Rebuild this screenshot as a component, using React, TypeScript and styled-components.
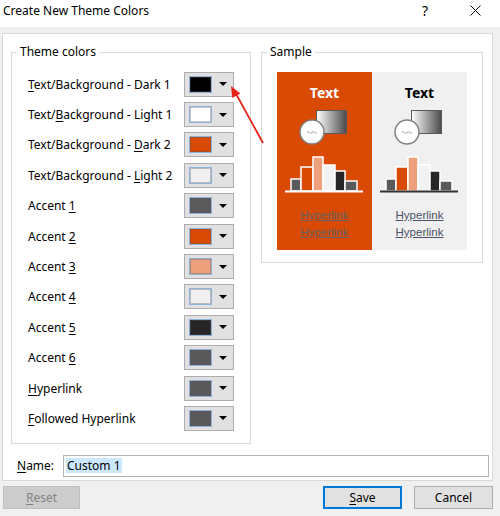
import React from 'react';
import styled, {createGlobalStyle} from 'styled-components';

const GlobalStyle = createGlobalStyle`
  html, body {
    margin: 0;
    padding: 0;
    background: #f0f0f0;
  }
  body {
    font-family: 'Segoe UI', 'Noto Sans', sans-serif;
  }
`;

// label split around its underlined access key
type Swatch = {pre: string; key: string; post: string; color: string};

const rows: Swatch[] = [
  {pre: '', key: 'T', post: 'ext/Background - Dark 1', color: '#000000'},
  {pre: 'Text/', key: 'B', post: 'ackground - Light 1', color: '#ffffff'},
  {pre: 'Text/Background - ', key: 'D', post: 'ark 2', color: '#d94a05'},
  {pre: 'Text/Background - ', key: 'L', post: 'ight 2', color: '#f0f0f0'},
  {pre: 'Accent ', key: '1', post: '', color: '#5a5a5a'},
  {pre: 'Accent ', key: '2', post: '', color: '#d94a05'},
  {pre: 'Accent ', key: '3', post: '', color: '#eda07b'},
  {pre: 'Accent ', key: '4', post: '', color: '#f0f0f0'},
  {pre: 'Accent ', key: '5', post: '', color: '#262626'},
  {pre: 'Accent ', key: '6', post: '', color: '#595959'},
  {pre: '', key: 'H', post: 'yperlink', color: '#595959'},
  {pre: '', key: 'F', post: 'ollowed Hyperlink', color: '#595959'},
];

// bar geometry inside the sample drawing: [left, right, top]
const bars: [number, number, number][] = [
  [14, 24, 75],
  [24, 36, 63],
  [36, 46, 53],
  [46, 58, 61],
  [58, 68, 67],
  [68, 80, 77],
];

const barColors = ['#5a5a5a', '#d94a05', '#eda07b', '#f2f2f2', '#262626', '#5a5a5a'];

type SampleProps = {
  id: string;
  bg: string;
  text: string;
  link: string;
  base: string;
};

const SamplePanel: React.FC<SampleProps> = ({id, bg, text, link, base}) => (
  <Panel $bg={bg}>
    <PanelTitle $color={text}>Text</PanelTitle>
    <svg width="95" height="90" viewBox="0 0 95 90">
      <defs>
        <linearGradient id={id} x1="0" y1="0" x2="1" y2="0">
          <stop offset="0" stopColor="#ffffff" />
          <stop offset="1" stopColor="#4a4a4a" />
        </linearGradient>
      </defs>
      <rect x="39.5" y="6.5" width="30" height="23" fill={`url(#${id})`} stroke="#595959" />
      <circle cx="35" cy="28" r="12" fill="#ffffff" stroke="#7f7f7f" strokeWidth="1.5" />
      <path
        d="M30 28.5 q1.25 -1.6 2.5 0 t2.5 0 t2.5 0 t2.5 0"
        fill="none"
        stroke="#8a8a8a"
        strokeWidth="0.8"
      />
      {bars.map(([l, r, t], i) => (
        <rect
          key={i}
          x={l}
          y={t}
          width={r - l}
          height={87 - t}
          fill={barColors[i]}
          stroke="#ffffff"
          strokeWidth="1.5"
        />
      ))}
      <line x1="8" y1="87.5" x2="86" y2="87.5" stroke={base} strokeWidth="2" />
    </svg>
    <Links>
      <SampleLink $color={link}>Hyperlink</SampleLink>
      <SampleLink $color={link}>Hyperlink</SampleLink>
    </Links>
  </Panel>
);

const App: React.FC = () => (
  <>
    <GlobalStyle />
    <Dialog>
      <TitleBar>
        <Title>Create New Theme Colors</Title>
        <HelpButton>?</HelpButton>
        <CloseButton>
          <svg width="11" height="11" viewBox="0 0 11 11">
            <path d="M0.5 0.5 L10.5 10.5 M10.5 0.5 L0.5 10.5" stroke="#000" strokeWidth="1" />
          </svg>
        </CloseButton>
      </TitleBar>

      <Body>
        <Columns>
          <Group>
            <Legend>Theme colors</Legend>
            <ThemeList>
              {rows.map((row, i) => (
                <Row key={i}>
                  <Label>
                    {row.pre}
                    <Key>{row.key}</Key>
                    {row.post}
                  </Label>
                  <ColorButton>
                    <SwatchBox $color={row.color} />
                    <DropArrow />
                  </ColorButton>
                </Row>
              ))}
            </ThemeList>
          </Group>

          <SampleGroup>
            <Legend>Sample</Legend>
            <SampleBody>
              <SamplePanel id="g1" bg="#d94a05" text="#ffffff" link="#626262" base="#ffffff" />
              <SamplePanel id="g2" bg="#f0f0f0" text="#000000" link="#4b5068" base="#333333" />
            </SampleBody>
          </SampleGroup>
        </Columns>

        <NameRow>
          <NameLabel>
            <Key>N</Key>ame:
          </NameLabel>
          <NameField>
            <Selected>Custom 1</Selected>
          </NameField>
        </NameRow>
      </Body>

      <Footer>
        <Button disabled $width={77}>
          <Key>R</Key>eset
        </Button>
        <Spacer />
        <Button $primary $width={79}>
          <Key>S</Key>ave
        </Button>
        <Button $width={79}>Cancel</Button>
      </Footer>

      <Annotation width="500" height="516" viewBox="0 0 500 516">
        <line x1="263" y1="143" x2="235" y2="92" stroke="#e32219" strokeWidth="1.8" />
        <polygon points="231,86 232.3,97.9 240.3,93.5" fill="#e32219" />
      </Annotation>
    </Dialog>
  </>
);

export default App;

const Dialog = styled.div`
  position: relative;
  width: 500px;
  height: 516px;
  display: flex;
  flex-direction: column;
  background: #f0f0f0;
  color: #000;
  font-size: 12px;
  overflow: hidden;
`;

const TitleBar = styled.div`
  height: 27px;
  box-sizing: border-box;
  display: flex;
  align-items: flex-start;
  padding: 3px 0 0 3px;
  background: #ffffff;
  line-height: 16px;
`;

const Title = styled.div`
  flex: 1;
  font-size: 12px;
`;

const HelpButton = styled.div`
  width: 46px;
  margin-right: 4px;
  text-align: center;
  font-size: 14px;
  line-height: 16px;
`;

const CloseButton = styled.div`
  width: 46px;
  margin-right: 2px;
  display: flex;
  justify-content: center;
  padding-top: 2px;
`;

const Body = styled.div`
  margin: 6px 7px 0 2px;
  height: 448px;
  box-sizing: border-box;
  background: #ffffff;
  border: 1px solid #d9d9d9;
  display: flex;
  flex-direction: column;
`;

const Columns = styled.div`
  display: flex;
  align-items: flex-start;
  gap: 10px;
  padding: 10px 8px 0 8px;
`;

const Group = styled.fieldset`
  width: 240px;
  box-sizing: border-box;
  margin: 0;
  padding: 0;
  border: 1px solid #dcdcdc;
  min-inline-size: 0;
`;

const SampleGroup = styled(Group)`
  width: 222px;
`;

const Legend = styled.legend`
  margin-left: 5px;
  padding: 0 3px;
  font-size: 12px;
  line-height: 16px;
`;

const ThemeList = styled.div`
  display: grid;
  grid-auto-rows: 30.4px;
  padding: 9px 16px 9px 16px;
`;

const Row = styled.div`
  display: flex;
  align-items: center;
`;

const Label = styled.div`
  flex: 1;
  white-space: nowrap;
`;

const Key = styled.u`
  text-decoration: underline;
  text-underline-offset: 2px;
`;

const ColorButton = styled.div`
  width: 50px;
  height: 25px;
  box-sizing: border-box;
  display: flex;
  align-items: center;
  padding-left: 4px;
  background: #e1e1e1;
  border: 1px solid #adadad;
`;

const SwatchBox = styled.div<{$color: string}>`
  width: 23px;
  height: 17px;
  box-sizing: border-box;
  background: ${(p) => p.$color};
  border: 1px solid #8fb1d8;
  box-shadow: inset 0 0 0 1px rgba(90, 90, 90, 0.35);
`;

const DropArrow = styled.div`
  flex: 1;
  display: flex;
  justify-content: center;

  &::after {
    content: '';
    border-left: 4px solid transparent;
    border-right: 4px solid transparent;
    border-top: 4px solid #000;
  }
`;

const SampleBody = styled.div`
  display: flex;
  padding: 12px 15px 12px 15px;
`;

const Panel = styled.div<{$bg: string}>`
  width: 95px;
  height: 178px;
  display: flex;
  flex-direction: column;
  align-items: center;
  background: ${(p) => p.$bg};

  svg {
    margin-top: 3px;
    display: block;
  }
`;

const PanelTitle = styled.div<{$color: string}>`
  margin-top: 13px;
  font-family: 'Segoe UI', 'Noto Sans', sans-serif;
  font-weight: 700;
  font-size: 14px;
  line-height: 16px;
  color: ${(p) => p.$color};
`;

const Links = styled.div`
  margin-top: 13px;
  display: flex;
  flex-direction: column;
  align-items: center;
`;

const SampleLink = styled.span<{$color: string}>`
  font-family: 'Liberation Sans', Arial, sans-serif;
  font-size: 11.5px;
  line-height: 17px;
  color: ${(p) => p.$color};
  text-decoration: underline;
`;

const NameRow = styled.div`
  display: flex;
  align-items: center;
  margin-top: 11px;
  padding: 0 3px 0 14px;
`;

const NameLabel = styled.div`
  width: 46px;
`;

const NameField = styled.div`
  flex: 1;
  height: 22px;
  box-sizing: border-box;
  display: flex;
  align-items: center;
  padding-left: 2px;
  border: 1px solid #b4b4b4;
`;

const Selected = styled.span`
  background: #cce8ff;
  padding: 0 1px;
  line-height: 15px;
`;

const Footer = styled.div`
  display: flex;
  gap: 12px;
  padding: 5px 7px 0 3px;
`;

const Spacer = styled.div`
  flex: 1;
`;

const Button = styled.button<{$primary?: boolean; $width: number}>`
  width: ${(p) => p.$width}px;
  height: 23px;
  box-sizing: border-box;
  padding: 0;
  font-family: 'Segoe UI', 'Noto Sans', sans-serif;
  font-size: 12px;
  color: #000;
  background: #e1e1e1;
  border: ${(p) => (p.$primary ? '2px solid #0078d7' : '1px solid #adadad')};

  &:disabled {
    background: #cccccc;
    border-color: #bfbfbf;
    color: #838383;
  }
`;

const Annotation = styled.svg`
  position: absolute;
  top: 0;
  left: 0;
  pointer-events: none;
`;
